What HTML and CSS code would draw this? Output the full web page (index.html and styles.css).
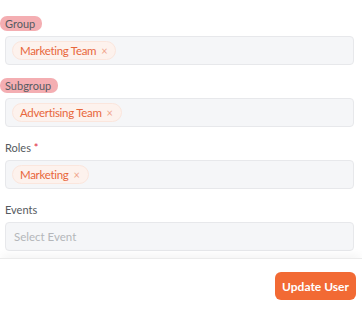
FILE: index.html
```html
<!DOCTYPE html>
<html lang="en">
  <head>
    <meta charset="UTF-8" />
    <meta name="viewport" content="width=device-width, initial-scale=1.0" />
    <title>Edit User</title>
    <link rel="stylesheet" href="styles.css">
  </head>
  <body>
    <div id="form">
      <div class="field">
        <div class="label"><span class="mark">Group</span></div>
        <div class="select">
          <span class="chip">Marketing Team <span class="x">&times;</span></span>
        </div>
      </div>
      <div class="field">
        <div class="label"><span class="mark">Subgroup</span></div>
        <div class="select">
          <span class="chip">Advertising Team <span class="x">&times;</span></span>
        </div>
      </div>
      <div class="field">
        <div class="label">Roles <span class="req">*</span></div>
        <div class="select">
          <span class="chip">Marketing <span class="x">&times;</span></span>
        </div>
      </div>
      <div class="field">
        <div class="label">Events</div>
        <div class="select">
          <span class="placeholder">Select Event</span>
        </div>
      </div>
    </div>
    <div id="footer">
      <button id="btn">Update User</button>
    </div>
  </body>
</html>
```

FILE: styles.css
```css
body {
  margin: 0;
  font-family: Lato, "Open Sans", sans-serif;
  background: #fff;
}
#form {
  padding: 17px 8px 1px 5px;
  height: 240px;
  box-sizing: border-box;
}
.field {
  margin-bottom: 14px;
}
.label {
  font-size: 11px;
  line-height: 14px;
  color: #555a60;
  margin-bottom: 5px;
}
.mark {
  background: rgba(236, 120, 126, 0.6);
  border-radius: 7px;
  padding: 1px 7px 1px 5px;
  margin-left: -5px;
}
.req {
  color: #e0263a;
}
.select {
  height: 29px;
  box-sizing: border-box;
  background: #f5f6f8;
  border: 1px solid #e7e8eb;
  border-radius: 4px;
  display: flex;
  align-items: center;
  padding-left: 6px;
}
.chip {
  height: 19px;
  box-sizing: border-box;
  display: inline-flex;
  align-items: center;
  padding: 0 8px 0 7px;
  border-radius: 10px;
  background: #fdf2ed;
  border: 1px solid #fbe6dd;
  color: #e8673c;
  font-size: 11.5px;
  letter-spacing: -0.3px;
}
.x {
  margin-left: 5px;
  color: #f0a48a;
  font-size: 11px;
}
.placeholder {
  color: #b4b6ba;
  font-size: 11.5px;
  padding-left: 2px;
}
#footer {
  border-top: 1px solid #ebebeb;
  box-shadow: 0 -6px 8px -2px rgba(0, 0, 0, 0.04);
  margin-top: 18px;
  padding: 13px 6px 10px 0;
  display: flex;
  justify-content: flex-end;
}
#btn {
  width: 81px;
  height: 28px;
  padding: 0;
  background-color: #f26a34;
  color: white;
  border: none;
  border-radius: 6px;
  font-family: Lato, "Open Sans", sans-serif;
  font-weight: bold;
  font-size: 12px;
}
```
